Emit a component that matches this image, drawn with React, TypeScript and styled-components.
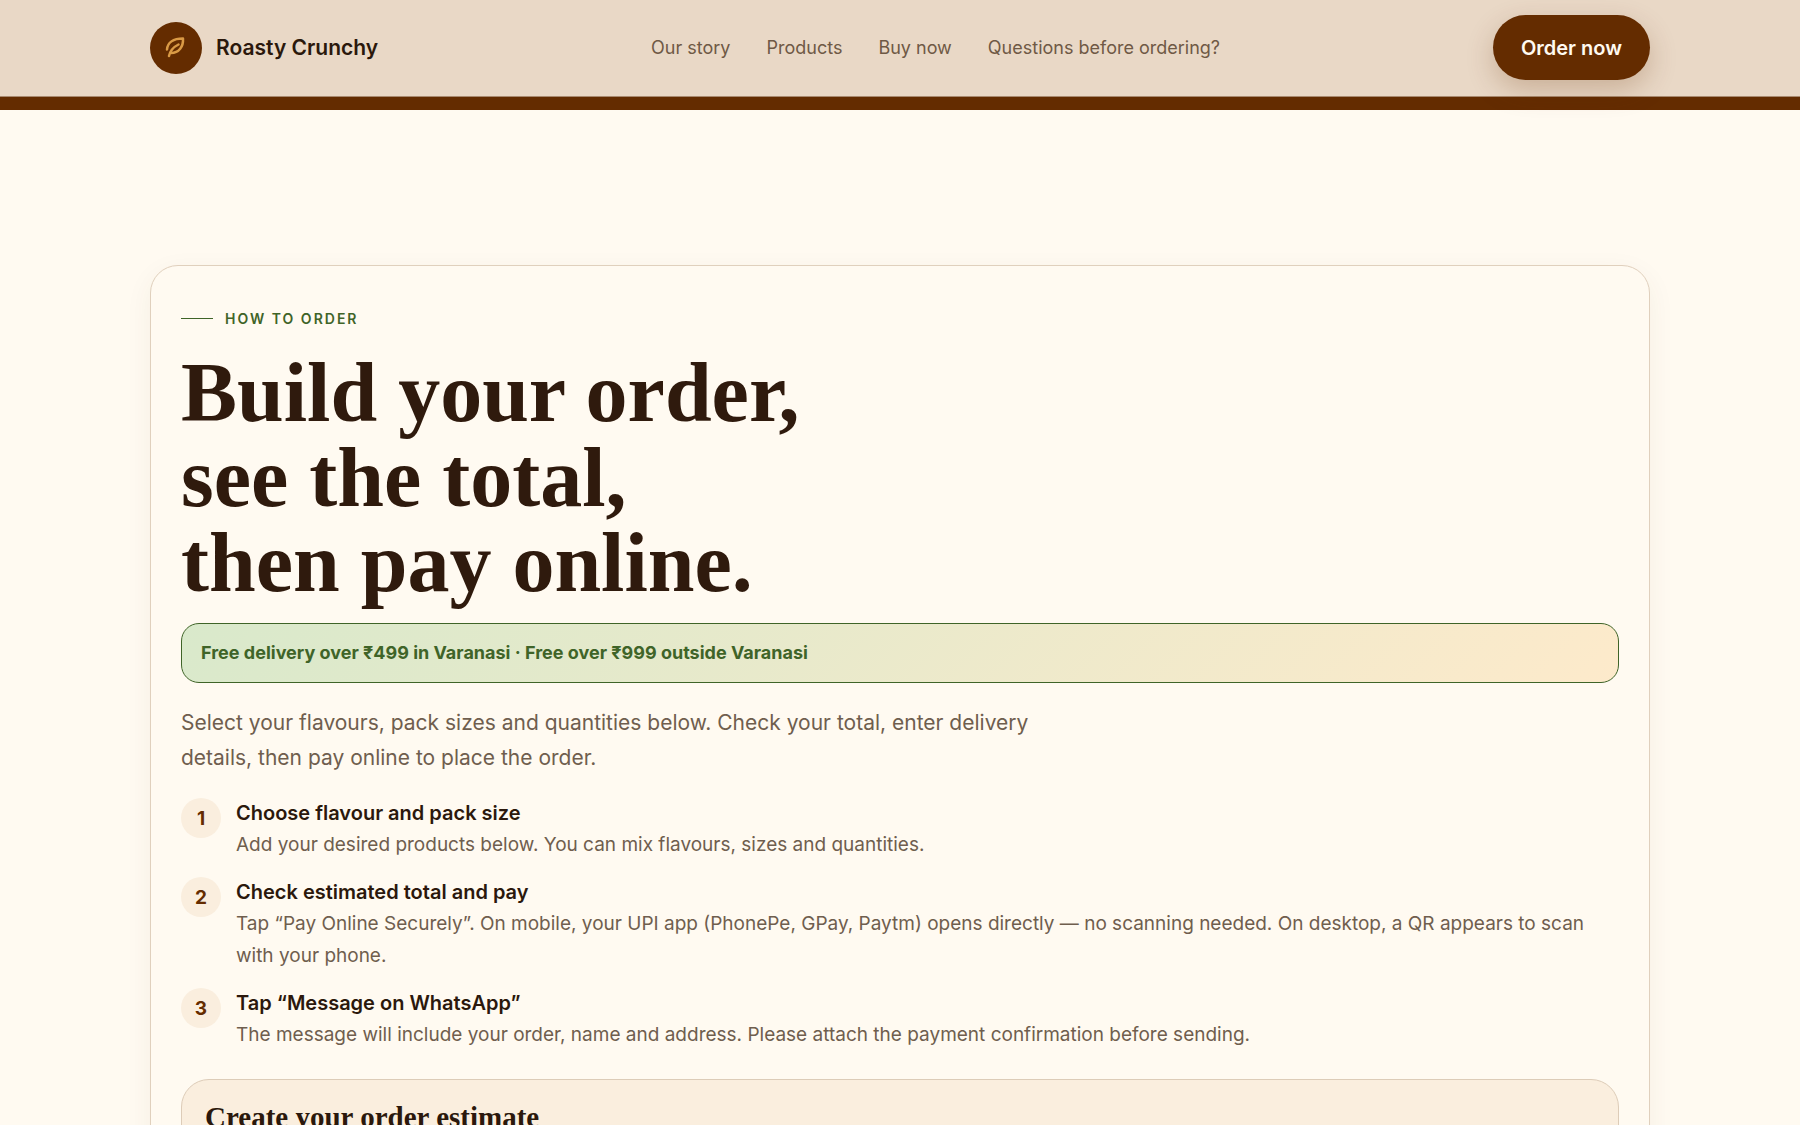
import React from "react";
import styled, { createGlobalStyle } from "styled-components";

const sans = `Inter, "Liberation Sans", sans-serif`;
const serif = `"Liberation Serif", serif`;

const Global = createGlobalStyle`
  *, *::before, *::after { box-sizing: border-box; }
  html { background: #fffaf1; }
  body { margin: 0; font-family: ${sans}; color: #2b180c; overflow: hidden; }
  h1, h2, h3, p, ol { margin: 0; padding: 0; }
`;

const Page = styled.div`
  height: 100vh;
  overflow: hidden;
  background: #fffaf1;
`;
const Header = styled.header`
  position: relative;
  background: #e9d8c6;
  border-bottom: 1px solid #a98a6f;
`;
const Container = styled.div`
  width: calc(100% - 48px);
  max-width: 1500px;
  margin: 0 auto;
`;
const Bar = styled(Container)`
  display: flex;
  align-items: center;
  justify-content: space-between;
  padding: 15px 0 16px;
`;
const Brand = styled.a`
  display: flex;
  align-items: center;
  gap: 14px;
  color: #2b180c;
  font-size: 21px;
  font-weight: 600;
  text-decoration: none;
`;
const BrandMark = styled.span`
  display: grid;
  place-items: center;
  width: 52px;
  height: 52px;
  border-radius: 50%;
  background: #642c00;
`;
const Nav = styled.nav`
  display: flex;
  gap: 36px;
`;
const NavLink = styled.a`
  color: #6f5945;
  font-size: 18px;
  text-decoration: none;
`;
const OrderButton = styled.button`
  height: 65px;
  padding: 0 28px;
  border: 0;
  border-radius: 33px;
  background: #642c00;
  color: #fffaf1;
  font: 600 20px ${sans};
  box-shadow: 0 10px 28px rgba(100, 44, 0, 0.24);
  cursor: pointer;
`;
const Strip = styled.div`
  height: 13px;
  background: #642c00;
`;
const Main = styled(Container).attrs({ as: "main" })`
  padding-top: 155px;
`;
const Card = styled.section`
  padding: 36px 30px;
  border: 1px solid #e0d0bd;
  border-radius: 28px;
  background: #fffaf1;
  box-shadow: 0 8px 28px rgba(80, 70, 20, 0.06);
`;
const Eyebrow = styled.p`
  display: flex;
  align-items: center;
  gap: 12px;
  color: #3f6428;
  font-size: 14px;
  font-weight: 600;
  line-height: 33px;
  letter-spacing: 2px;
  text-transform: uppercase;

  &::before {
    content: "";
    width: 32px;
    height: 1px;
    background: #3f6428;
  }
`;
const Title = styled.h1`
  margin-top: 15px;
  color: #2f1a0d;
  font: 700 84px/85px ${serif};
`;
const Offer = styled.p`
  margin-top: 18px;
  padding: 14px 19px;
  border: 1px solid #3f6428;
  border-radius: 18px;
  background: linear-gradient(135deg, #d9e9cb, #fdeacb);
  color: #3f6428;
  font-size: 18px;
  font-weight: 700;
  line-height: 30px;
`;
const Lead = styled.p`
  max-width: 860px;
  margin-top: 22px;
  color: #6f5e4e;
  font-size: 21px;
  line-height: 35px;
`;
const Steps = styled.ol`
  display: grid;
  gap: 16px;
  margin-top: 23px;
  padding-right: 12px;
  list-style: none;
`;
const StepItem = styled.li`
  display: flex;
  align-items: flex-start;
  gap: 15px;
`;
const StepNumber = styled.span`
  display: grid;
  flex: none;
  place-items: center;
  width: 40px;
  height: 40px;
  border-radius: 50%;
  background: #faeede;
  color: #642c00;
  font-size: 19px;
  font-weight: 700;
`;
const StepTitle = styled.h3`
  color: #2b180c;
  font-size: 20px;
  font-weight: 600;
  line-height: 31px;
`;
const StepText = styled.p`
  color: #6f5e4e;
  font-size: 19px;
  line-height: 32px;
`;
const Estimate = styled.section`
  min-height: 160px;
  margin-top: 28px;
  padding: 20px 23px;
  border: 1px solid #ddccb8;
  border-radius: 28px;
  background: #faeede;
`;
const EstimateTitle = styled.h2`
  color: #2b180c;
  font: 700 29px/34px ${serif};
`;

const links = ["Our story", "Products", "Buy now", "Questions before ordering?"];
const steps = [
  {
    title: "Choose flavour and pack size",
    text: "Add your desired products below. You can mix flavours, sizes and quantities.",
  },
  {
    title: "Check estimated total and pay",
    text: "Tap “Pay Online Securely”. On mobile, your UPI app (PhonePe, GPay, Paytm) opens directly — no scanning needed. On desktop, a QR appears to scan with your phone.",
  },
  {
    title: "Tap “Message on WhatsApp”",
    text: "The message will include your order, name and address. Please attach the payment confirmation before sending.",
  },
];

function Leaf() {
  return (
    <svg width="26" height="26" viewBox="0 0 26 26" fill="none" stroke="#d99a45" strokeWidth="2.5" strokeLinecap="round" strokeLinejoin="round" aria-hidden="true">
      <path d="M4 14.500C4.500 8 10 3.500 20 3.500 20.500 11.500 16 18 8 18" />
      <path d="M6 21C7 16 10.500 12 15.500 9.500" />
    </svg>
  );
}

export default function App() {
  return (
    <Page>
      <Global />
      <Header>
        <Bar>
          <Brand href="#top">
            <BrandMark><Leaf /></BrandMark>
            Roasty Crunchy
          </Brand>
          <Nav aria-label="Main">
            {links.map((label) => <NavLink key={label} href="#">{label}</NavLink>)}
          </Nav>
          <OrderButton type="button">Order now</OrderButton>
        </Bar>
      </Header>
      <Strip />
      <Main>
        <Card>
          <Eyebrow>How to order</Eyebrow>
          <Title>Build your order,<br />see the total,<br />then pay online.</Title>
          <Offer>Free delivery over ₹499 in Varanasi · Free over ₹999 outside Varanasi</Offer>
          <Lead>Select your flavours, pack sizes and quantities below. Check your total, enter delivery details, then pay online to place the order.</Lead>
          <Steps>
            {steps.map((step, i) => (
              <StepItem key={step.title}>
                <StepNumber>{i + 1}</StepNumber>
                <div>
                  <StepTitle>{step.title}</StepTitle>
                  <StepText>{step.text}</StepText>
                </div>
              </StepItem>
            ))}
          </Steps>
          <Estimate>
            <EstimateTitle>Create your order estimate</EstimateTitle>
          </Estimate>
        </Card>
      </Main>
    </Page>
  );
}
